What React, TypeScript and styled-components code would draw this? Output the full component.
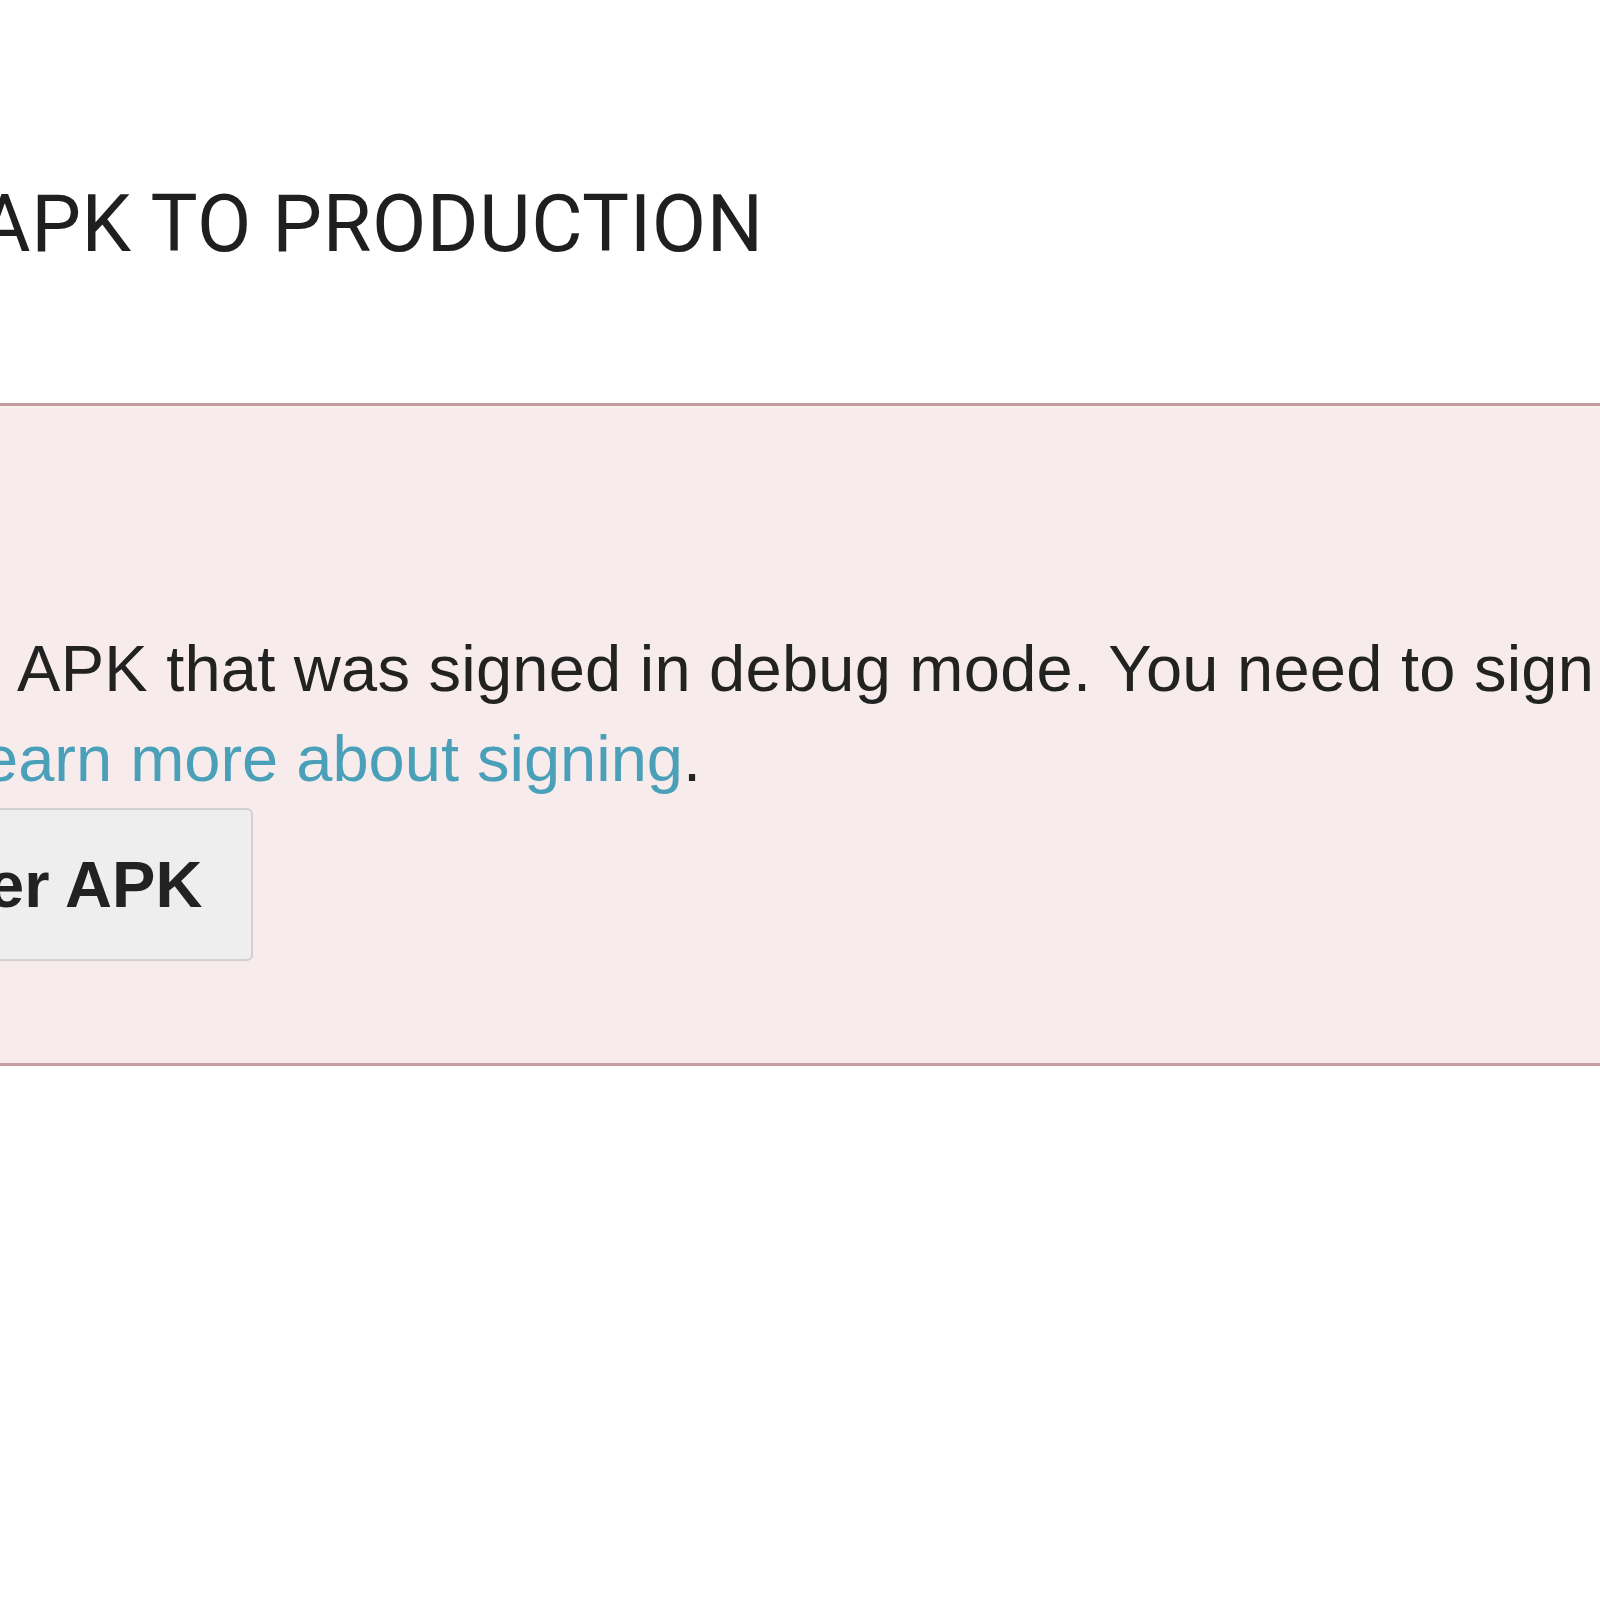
import React from "react";
import styled, { createGlobalStyle } from "styled-components";

const Global = createGlobalStyle`
  html, body {
    margin: 0;
    padding: 0;
    background: #ffffff;
    overflow: hidden;
  }
  body {
    width: 1600px;
    height: 1600px;
  }
`;

const Page = styled.div`
  width: 1600px;
  height: 1600px;
  overflow: hidden;
  padding-top: 185px;
  box-sizing: border-box;
  background: #ffffff;
`;

const Title = styled.h1`
  margin: 0 0 0 -21px;
  font-family: Roboto, "Liberation Sans", sans-serif;
  font-weight: 400;
  font-size: 79px;
  line-height: 79px;
  color: #1f1f1f;
  white-space: nowrap;
  letter-spacing: 0.6px;
`;

const Alert = styled.section`
  margin-top: 139px;
  margin-left: -10px;
  margin-right: -10px;
  padding: 218px 10px 102px;
  background: #f7eceb;
  border-top: 3px solid #c59da0;
  border-bottom: 3px solid #c59da0;
  box-shadow: inset 0 3px 2px -1px #fdf3ee;
`;

const Message = styled.p`
  margin: 0;
  font-family: "Liberation Sans", Arial, sans-serif;
  font-size: 65px;
  line-height: 90px;
  color: #222222;
  white-space: nowrap;
`;

const Line = styled.span<{ $indent: number; $spacing?: number }>`
  display: block;
  margin-left: ${(p) => p.$indent}px;
  letter-spacing: ${(p) => p.$spacing ?? 0}px;
`;

const Link = styled.a`
  color: #4a9fb9;
  text-decoration: none;
`;

const Button = styled.button`
  display: block;
  margin: 4px 0 0 -62px;
  padding: 29px 49px 29px 48px;
  font-family: "Liberation Sans", Arial, sans-serif;
  font-weight: 700;
  font-size: 65px;
  line-height: 91px;
  color: #222222;
  background: #eeeeee;
  border: 2px solid #d2d0d0;
  border-radius: 6px;
  white-space: nowrap;
`;

export default function App() {
  return (
    <>
      <Global />
      <Page>
        <Title>APK TO PRODUCTION</Title>
        <Alert>
          <Message>
            <Line $indent={-34} $spacing={0.24}>
              n APK that was signed in debug mode. You need to sign
            </Line>
            <Line $indent={-18}>
              <Link href="#">earn more about signing</Link>.
            </Line>
          </Message>
          <Button>er APK</Button>
        </Alert>
      </Page>
    </>
  );
}
